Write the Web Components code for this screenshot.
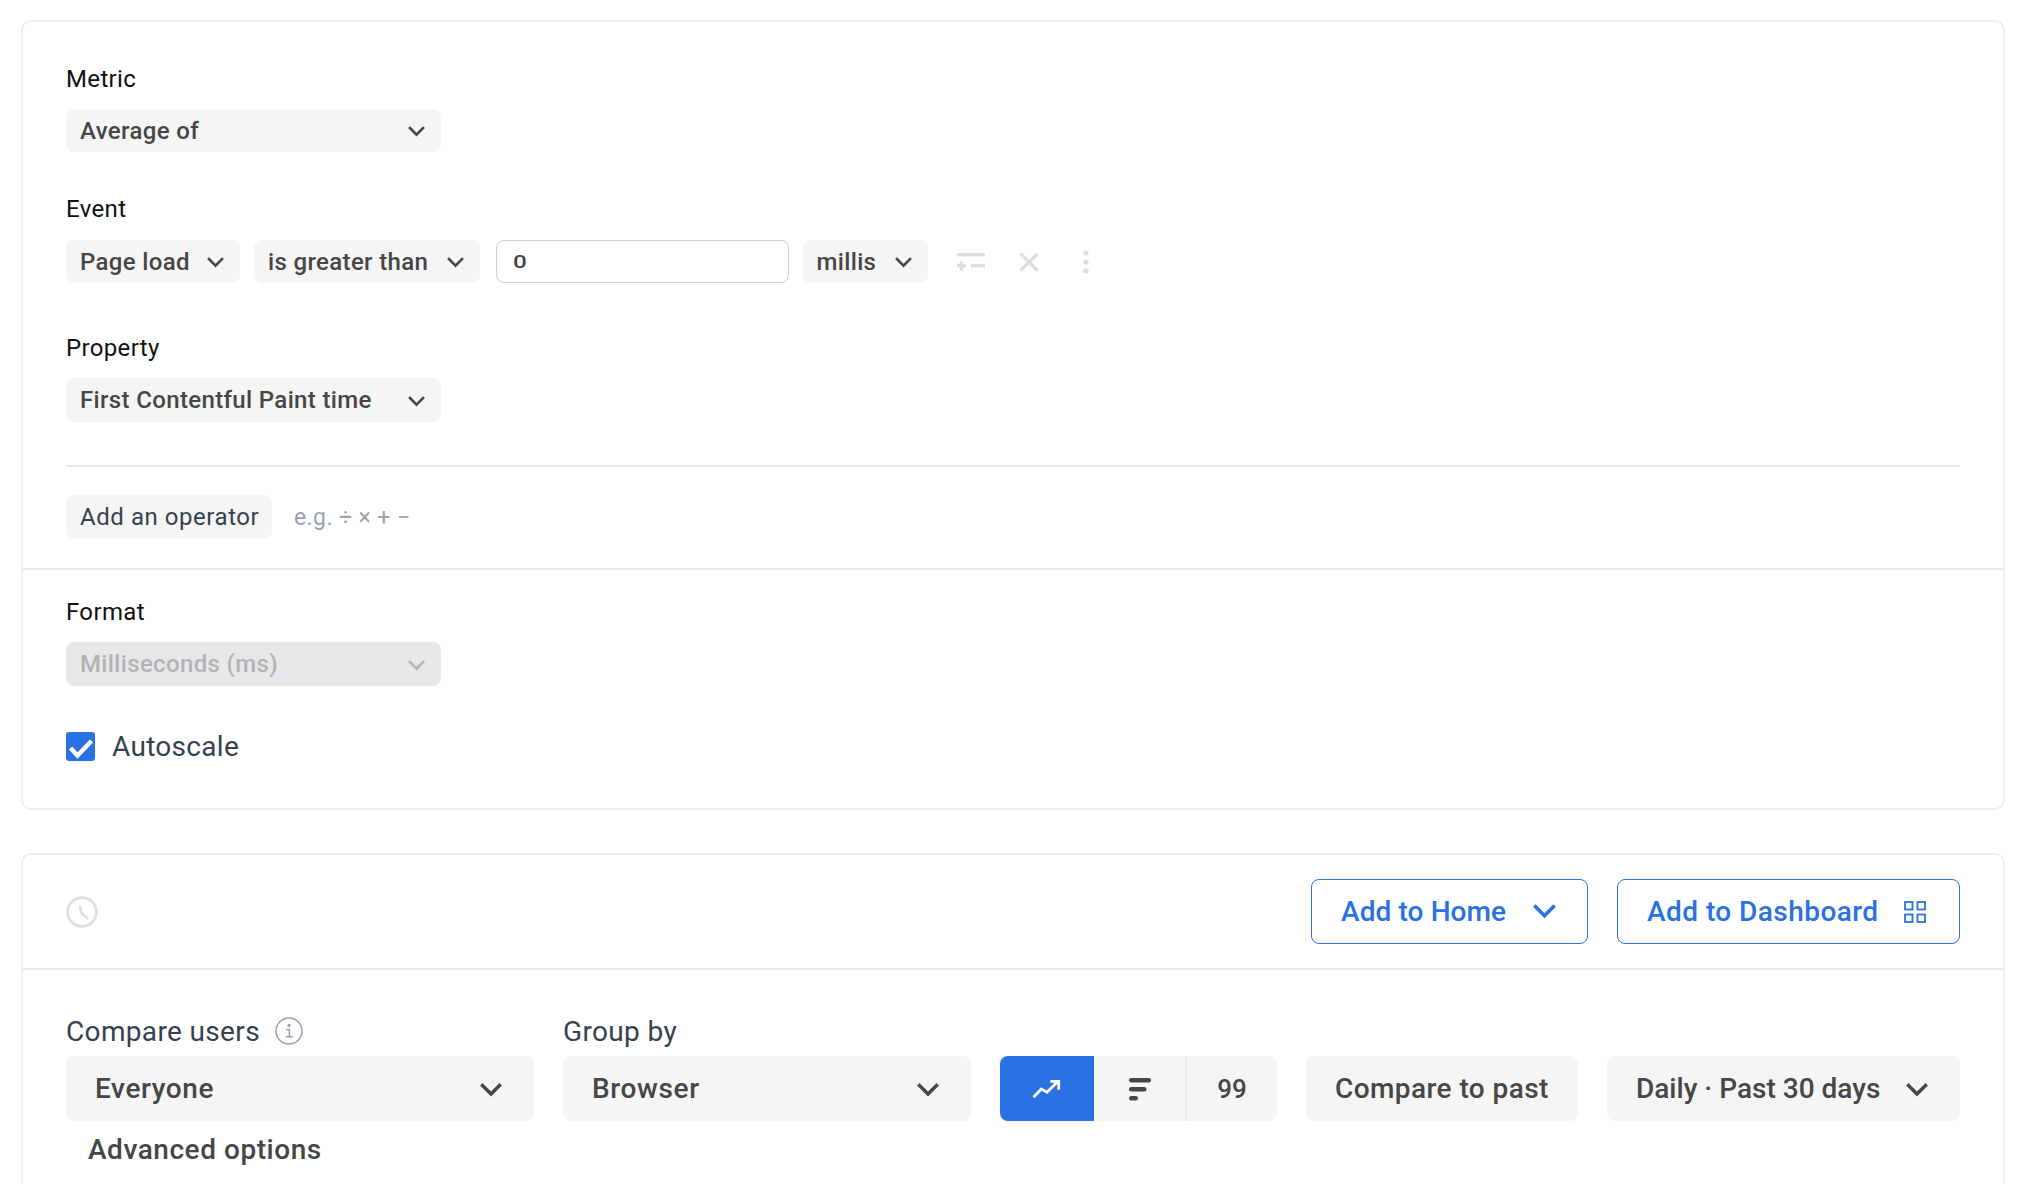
<!DOCTYPE html>
<html>
<head>
<meta charset="utf-8">
<style>
  html, body { margin: 0; height: 100%; background: #fff; overflow: hidden; }
  body { font-family: Roboto, sans-serif; padding: 20px 15px 0 21px; box-sizing: border-box; }
  .gap-event { margin-top: 42px; }
  .gap-property { margin-top: 50px; }
  .row { display: flex; gap: 14px; align-items: center; }
</style>
</head>
<body>
<x-card style="height: 790px">
  <x-section pad="42px 43px 29px 43px">
    <x-field label="Metric"><x-select width="375" text="Average of"></x-select></x-field>
    <x-field class="gap-event" gap="16" label="Event">
      <div class="row">
        <x-select width="174" text="Page load"></x-select>
        <x-select width="226" text="is greater than"></x-select>
        <x-input width="293" value="0"></x-input>
        <x-select width="125" text="millis"></x-select>
        <x-row-actions></x-row-actions>
      </div>
    </x-field>
    <x-field class="gap-property" label="Property"><x-select width="375" height="44" text="First Contentful Paint time"></x-select></x-field>
    <x-rule></x-rule>
    <x-operator></x-operator>
  </x-section>
  <x-section divided pad="27px 43px 48px 43px">
    <x-field label="Format"><x-select width="375" height="44" text="Milliseconds (ms)" disabled></x-select></x-field>
    <x-check>Autoscale</x-check>
  </x-section>
</x-card>
<x-card style="margin-top: 43px; height: 400px">
  <x-header></x-header>
  <x-controls></x-controls>
</x-card>

<script>
const CHEVRON = '<svg viewBox="0 0 22 14" fill="none" stroke="currentColor" stroke-width="3.4" stroke-linecap="square"><path d="M2.5 2.5 11 11l8.5-8.5"/></svg>'

class Base extends HTMLElement {
  constructor() {
    super()
    this.attachShadow({ mode: 'open' })
  }
}

class XCard extends Base {
  connectedCallback() {
    this.shadowRoot.innerHTML = `
      <style>
        :host { display: block; box-sizing: border-box; width: 1984px; border: 2px solid #eeeff1; border-radius: 10px; background: #fff; overflow: hidden; }
      </style>
      <slot></slot>`
  }
}

class XSection extends Base {
  connectedCallback() {
    const top = this.hasAttribute('divided') ? 'border-top: 2px solid #e6e8eb;' : ''
    this.shadowRoot.innerHTML = `
      <style>
        :host { display: block; padding: ${this.getAttribute('pad')}; ${top} }
      </style>
      <slot></slot>`
  }
}

class XField extends Base {
  connectedCallback() {
    const gap = this.getAttribute('gap') || 15
    this.shadowRoot.innerHTML = `
      <style>
        :host { display: block; }
        label { display: block; font-size: 24px; line-height: 30px; color: #111; margin-bottom: ${gap}px; letter-spacing: .35px; }
      </style>
      <label>${this.getAttribute('label')}</label>
      <slot></slot>`
  }
}

class XSelect extends Base {
  connectedCallback() {
    const disabled = this.hasAttribute('disabled')
    const height = this.getAttribute('height') || 43
    this.shadowRoot.innerHTML = `
      <style>
        :host { display: inline-flex; box-sizing: border-box; width: ${this.getAttribute('width')}px; height: ${height}px; padding: 0 16px 0 14px; align-items: center; justify-content: space-between; border-radius: 8px; background: ${disabled ? '#e8e8eb' : '#f5f5f5'}; color: ${disabled ? '#b3b3b6' : '#464646'}; font-size: 24px; font-weight: 500; letter-spacing: .35px; white-space: nowrap; }
        svg { width: 17px; height: 11px; flex: none; margin-top: 2px; }
      </style>
      <span>${this.getAttribute('text')}</span>${CHEVRON}`
  }
}

class XInput extends Base {
  connectedCallback() {
    this.shadowRoot.innerHTML = `
      <style>
        :host { display: inline-flex; box-sizing: border-box; width: ${this.getAttribute('width')}px; height: 43px; margin-left: 1.5px; padding: 0 16px; align-items: center; border: 1.5px solid #cfcde0; border-radius: 8px; background: #fff; color: #464646; font-size: 18px; font-weight: 500; }
        span { display: inline-block; transform: scaleX(1.35); transform-origin: left center; }
      </style>
      <span>${this.getAttribute('value')}</span>`
  }
}

class XRowActions extends Base {
  connectedCallback() {
    this.shadowRoot.innerHTML = `
      <style>
        :host { display: inline-flex; align-items: center; margin-left: 15px; color: #dedede; }
        svg { display: block; }
        .filter { width: 28px; height: 20px; }
        .close { width: 20px; height: 20px; margin-left: 34px; }
        .more { width: 6px; height: 24px; margin-left: 44px; }
      </style>
      <svg class="filter" viewBox="0 0 28 20" fill="currentColor"><rect x="0" y="1" width="28" height="3.4"/><rect x="0" y="12" width="9" height="3.4"/><rect x="2.8" y="9.5" width="3.4" height="9.5"/><rect x="14" y="12" width="14" height="3.4"/></svg>
      <svg class="close" viewBox="0 0 20 20" fill="none" stroke="currentColor" stroke-width="3.2" stroke-linecap="square"><path d="M2.5 2.5l15 15M17.5 2.5l-15 15"/></svg>
      <svg class="more" viewBox="0 0 6 24" fill="currentColor"><circle cx="3" cy="3" r="2.6"/><circle cx="3" cy="12" r="2.6"/><circle cx="3" cy="21" r="2.6"/></svg>`
  }
}

class XRule extends Base {
  connectedCallback() {
    this.shadowRoot.innerHTML = `
      <style>
        :host { display: block; height: 2px; margin: 43px 0 28px; background: #e6e8eb; }
      </style>`
  }
}

class XOperator extends Base {
  connectedCallback() {
    this.shadowRoot.innerHTML = `
      <style>
        :host { display: flex; align-items: center; gap: 22px; height: 44px; }
        button { height: 44px; width: 206px; padding: 0 0 0 14px; border: 0; border-radius: 8px; background: #f5f5f5; color: #36414f; font: 400 24px Roboto, sans-serif; letter-spacing: .55px; text-align: left; white-space: nowrap; }
        span { color: #98a2ad; font-size: 23px; letter-spacing: .4px; }
      </style>
      <button>Add an operator</button>
      <span>e.g. ÷ × + −</span>`
  }
}

class XCheck extends Base {
  connectedCallback() {
    this.shadowRoot.innerHTML = `
      <style>
        :host { display: flex; align-items: center; gap: 17px; margin-top: 46px; height: 29px; color: #36414f; font-size: 28px; letter-spacing: .3px; }
        i { display: block; width: 29px; height: 29px; border-radius: 3px; background: #2a71e3; }
        svg { display: block; width: 29px; height: 29px; }
      </style>
      <i><svg viewBox="0 0 29 29" fill="none" stroke="#fff" stroke-width="4.4"><path d="M4.5 16l7 7.5L25.5 9"/></svg></i>
      <slot></slot>`
  }
}

class XOutlineButton extends Base {
  connectedCallback() {
    this.shadowRoot.innerHTML = `
      <style>
        :host { display: inline-flex; box-sizing: border-box; width: ${this.getAttribute('width')}px; height: 65px; padding: 0 ${this.getAttribute('right')}px 0 29px; align-items: center; justify-content: space-between; border: 1.5px solid #2a71e3; border-radius: 8px; color: #2a71e3; font-size: 28px; font-weight: 500; letter-spacing: ${this.getAttribute('ls')}px; white-space: nowrap; }
        ::slotted(svg) { display: block; flex: none; }
      </style>
      <span>${this.getAttribute('text')}</span><slot></slot>`
  }
}

class XHeader extends Base {
  connectedCallback() {
    this.shadowRoot.innerHTML = `
      <style>
        :host { display: flex; align-items: center; box-sizing: border-box; height: 115px; padding: 0 43px; border-bottom: 2px solid #e6e8eb; gap: 29px; }
        .clock { width: 32px; height: 32px; margin-right: auto; }
        .home { width: 23px; height: 15px; }
        .grid { width: 22px; height: 22px; }
      </style>
      <svg class="clock" viewBox="0 0 32 32" fill="none" stroke="#dfdfdf" stroke-width="2.8"><circle cx="16" cy="16" r="14.4"/><path d="M13.5 9.5l2.5 8.5 6.5 5"/></svg>
      <x-outline-button width="277" right="31" ls=".1" text="Add to Home"><svg class="home" viewBox="0 0 22 14" fill="none" stroke="#2a71e3" stroke-width="3.4" stroke-linecap="square"><path d="M2.5 2.5 11 11l8.5-8.5"/></svg></x-outline-button>
      <x-outline-button width="343" right="33" ls=".45" text="Add to Dashboard"><svg class="grid" viewBox="0 0 22 22" fill="none" stroke="#2a71e3" stroke-width="1.8"><rect x="1" y="1" width="7.5" height="7.5"/><rect x="13.5" y="1" width="7.5" height="7.5"/><rect x="1" y="13.5" width="7.5" height="7.5"/><rect x="13.5" y="13.5" width="7.5" height="7.5"/></svg></x-outline-button>`
  }
}

class XBigSelect extends Base {
  connectedCallback() {
    const w = this.getAttribute('width')
    const ls = this.getAttribute('ls') || 0
    this.shadowRoot.innerHTML = `
      <style>
        :host { display: flex; box-sizing: border-box; width: ${w}px; height: 65px; padding: 0 32px 0 29px; align-items: center; justify-content: space-between; border-radius: 8px; background: #f5f5f5; color: #464646; font-size: 28px; font-weight: 500; letter-spacing: ${ls}px; white-space: nowrap; }
        svg { width: 22px; height: 14px; flex: none; margin-top: 2px; }
      </style>
      <span>${this.getAttribute('text')}</span>${this.hasAttribute('plain') ? '' : CHEVRON}`
  }
}

class XChartToggle extends Base {
  connectedCallback() {
    this.shadowRoot.innerHTML = `
      <style>
        :host { display: flex; width: 277px; height: 65px; border-radius: 8px; overflow: hidden; background: #f5f5f5; color: #464646; font-size: 26px; font-weight: 500; }
        div { display: flex; align-items: center; justify-content: center; }
        .line { width: 94px; background: #2a71e3; }
        .bars { width: 91px; border-right: 2px solid #ececec; }
        .num { flex: 1; }
        svg { display: block; }
      </style>
      <div class="line"><svg width="30" height="20" viewBox="0 0 30 20" fill="none" stroke="#fff" stroke-width="2.8"><path d="M1.5 18.3 9.3 10l5.7 3.3L26 2.3M18.3 2.3h8.4v8.4"/></svg></div>
      <div class="bars"><svg width="24" height="24" viewBox="0 0 24 24" fill="#464646"><rect x="1" y="1" width="22" height="4.6" rx="2.3"/><rect x="1" y="10" width="17.5" height="4.6" rx="2.3"/><rect x="1" y="19" width="9" height="4.6" rx="2.3"/></svg></div>
      <div class="num">99</div>`
  }
}

class XControls extends Base {
  connectedCallback() {
    this.shadowRoot.innerHTML = `
      <style>
        :host { display: block; padding: 46px 43px 0 43px; }
        .row { display: flex; align-items: flex-end; gap: 29px; }
        .label { display: flex; align-items: center; gap: 15px; height: 30px; margin-bottom: 10px; color: #36414f; font-size: 28px; letter-spacing: .35px; }
        .adv { margin: 14px 0 0 22px; color: #464646; font-size: 28px; line-height: 30px; font-weight: 500; letter-spacing: .55px; }
        svg { display: block; }
      </style>
      <div class="row">
        <div>
          <div class="label">Compare users
            <svg width="28" height="28" viewBox="0 0 28 28" fill="none" stroke="#98a2ad" stroke-width="1.5"><circle cx="14" cy="14" r="13"/><path d="M11 12.5h3.4v7M10.8 19.7h7" /><circle cx="14" cy="8.5" r=".9" fill="#98a2ad"/></svg>
          </div>
          <x-big-select width="468" ls=".6" text="Everyone"></x-big-select>
        </div>
        <div>
          <div class="label">Group by</div>
          <x-big-select width="408" ls=".65" text="Browser"></x-big-select>
        </div>
        <x-chart-toggle></x-chart-toggle>
        <x-big-select width="272" ls=".43" text="Compare to past" plain></x-big-select>
        <x-big-select width="353" text="Daily · Past 30 days"></x-big-select>
      </div>
      <div class="adv">Advanced options</div>`
  }
}

customElements.define('x-card', XCard)
customElements.define('x-section', XSection)
customElements.define('x-field', XField)
customElements.define('x-select', XSelect)
customElements.define('x-input', XInput)
customElements.define('x-row-actions', XRowActions)
customElements.define('x-rule', XRule)
customElements.define('x-operator', XOperator)
customElements.define('x-check', XCheck)
customElements.define('x-outline-button', XOutlineButton)
customElements.define('x-header', XHeader)
customElements.define('x-big-select', XBigSelect)
customElements.define('x-chart-toggle', XChartToggle)
customElements.define('x-controls', XControls)
</script>
</body>
</html>
